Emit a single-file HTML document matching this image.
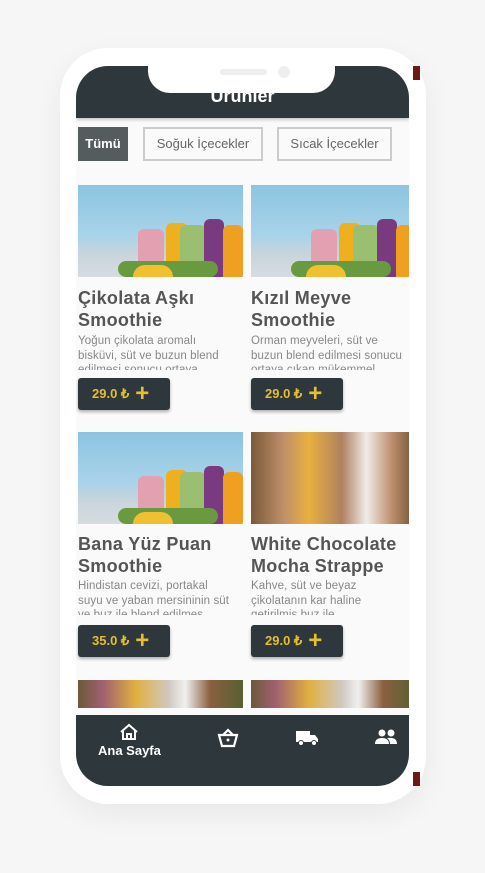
<!DOCTYPE html>
<html><head><meta charset="utf-8"><style>
*{margin:0;padding:0;box-sizing:border-box}
body{width:485px;height:873px;background:#f6f6f6;font-family:"Liberation Sans",sans-serif;position:relative;overflow:hidden}
.frame{position:absolute;left:60px;top:48px;width:366px;height:756px;background:#fff;border-radius:48px;box-shadow:0 10px 30px rgba(0,0,0,.06)}
.red{position:absolute;left:405px;width:15px;background:#6b1a1a}
.screen{position:absolute;left:76px;top:66px;width:333px;height:720px;background:#fafafa;border-radius:32px;overflow:hidden}
.hdr{position:absolute;left:0;top:0;width:333px;height:52px;background:#2d373c;color:#fff;font-weight:bold;font-size:18px;text-align:center;padding-top:20px;box-shadow:0 2px 3px rgba(0,0,0,.2)}
.notch{position:absolute;left:148px;top:66px;width:187px;height:27px;background:#fff;border-radius:0 0 22px 22px}
.spk{position:absolute;left:220px;top:69px;width:47px;height:6px;border-radius:3px;background:#eee}
.cam{position:absolute;left:278px;top:66px;width:12px;height:12px;border-radius:6px;background:#eee}
.tab{position:absolute;top:61px;height:34px;font-size:13px;color:#666;border:2px solid #ccc;text-align:center;line-height:30px}
.img{position:absolute;width:165px;height:92px;overflow:hidden;background:linear-gradient(#8cc4e0,#a9d3ea 55%,#c8d4dc 75%,#d6dce0)}
.b{position:absolute;bottom:0;border-radius:6px 6px 2px 2px}
.t{position:absolute;font-size:18px;font-weight:bold;color:#555;line-height:22px;width:170px;letter-spacing:.3px}
.d{position:absolute;font-size:11.5px;color:#888;line-height:14.5px;width:155px;height:36px;overflow:hidden;letter-spacing:.1px}
.btn{position:absolute;width:92px;height:32px;background:#2d373c;border-radius:3px;color:#e5bf2e;font-weight:bold;font-size:13px;line-height:32px;padding-left:14px;box-shadow:0 2px 3px rgba(0,0,0,.3)}
.btn span{font-size:24px;vertical-align:-3px;margin-left:6px}
.nav{position:absolute;left:0;top:649px;width:333px;height:71px;background:#2d373c}
.shake{background:linear-gradient(90deg,#6b5a3a,#a06070 15%,#e0b040 35%,#d0c8c0 55%,#f0f0f0 65%,#8a6040 80%,#556030)}
</style></head><body>
<div class="frame"></div>
<div class="red" style="top:66px;height:14px;left:413px;width:7px"></div>
<div class="red" style="top:772px;height:14px;left:413px;width:7px"></div>
<div class="screen">
<div class="hdr">Ürünler</div>
<div class="tab" style="left:2px;width:50px;background:#555c5e;border-color:#555c5e;color:#fff;font-weight:bold">Tümü</div>
<div class="tab" style="left:67px;width:120px">Soğuk İçecekler</div>
<div class="tab" style="left:201px;width:115px">Sıcak İçecekler</div>

<div class="img" style="left:2px;top:119px"><div class="b" style="left:60px;width:26px;height:48px;background:#e2a0b0"></div><div class="b" style="left:88px;width:22px;height:54px;background:#efb020"></div><div class="b" style="left:102px;width:26px;height:52px;background:#9bbf70"></div><div class="b" style="left:126px;width:20px;height:58px;background:#7a3a80"></div><div class="b" style="left:145px;width:20px;height:52px;background:#f0a020"></div><div class="b" style="left:40px;width:100px;height:16px;background:#6a9a40;border-radius:8px"></div><div class="b" style="left:55px;width:40px;height:12px;background:#f0c030;border-radius:20px 20px 0 0"></div></div>
<div class="img" style="left:175px;top:119px"><div class="b" style="left:60px;width:26px;height:48px;background:#e2a0b0"></div><div class="b" style="left:88px;width:22px;height:54px;background:#efb020"></div><div class="b" style="left:102px;width:26px;height:52px;background:#9bbf70"></div><div class="b" style="left:126px;width:20px;height:58px;background:#7a3a80"></div><div class="b" style="left:145px;width:20px;height:52px;background:#f0a020"></div><div class="b" style="left:40px;width:100px;height:16px;background:#6a9a40;border-radius:8px"></div><div class="b" style="left:55px;width:40px;height:12px;background:#f0c030;border-radius:20px 20px 0 0"></div></div>
<div class="t" style="left:2px;top:221px">Çikolata Aşkı Smoothie</div>
<div class="t" style="left:175px;top:221px">Kızıl Meyve Smoothie</div>
<div class="d" style="left:2px;top:268px">Yoğun çikolata aromalı bisküvi, süt ve buzun blend edilmesi sonucu ortaya</div>
<div class="d" style="left:175px;top:268px">Orman meyveleri,  süt ve buzun blend edilmesi sonucu ortaya çıkan mükemmel</div>
<div class="btn" style="left:2px;top:312px">29.0 ₺<span>+</span></div>
<div class="btn" style="left:175px;top:312px">29.0 ₺<span>+</span></div>

<div class="img" style="left:2px;top:366px"><div class="b" style="left:60px;width:26px;height:48px;background:#e2a0b0"></div><div class="b" style="left:88px;width:22px;height:54px;background:#efb020"></div><div class="b" style="left:102px;width:26px;height:52px;background:#9bbf70"></div><div class="b" style="left:126px;width:20px;height:58px;background:#7a3a80"></div><div class="b" style="left:145px;width:20px;height:52px;background:#f0a020"></div><div class="b" style="left:40px;width:100px;height:16px;background:#6a9a40;border-radius:8px"></div><div class="b" style="left:55px;width:40px;height:12px;background:#f0c030;border-radius:20px 20px 0 0"></div></div>
<div class="img" style="left:175px;top:366px;background:linear-gradient(90deg,#7a5a3a,#c0906a 20%,#e8b040 35%,#b08060 55%,#f0ece8 70%,#c09070 85%,#6a5030)"></div>
<div class="t" style="left:2px;top:467px">Bana Yüz Puan Smoothie</div>
<div class="t" style="left:175px;top:467px">White Chocolate Mocha Strappe</div>
<div class="d" style="left:2px;top:513px">Hindistan cevizi, portakal suyu ve yaban mersininin süt ve buz ile blend edilmes</div>
<div class="d" style="left:175px;top:513px">Kahve, süt ve beyaz çikolatanın kar haline getirilmiş buz ile</div>
<div class="btn" style="left:2px;top:559px">35.0 ₺<span>+</span></div>
<div class="btn" style="left:175px;top:559px">29.0 ₺<span>+</span></div>

<div class="img shake" style="left:2px;top:614px;height:28px"></div>
<div class="img shake" style="left:175px;top:614px;height:28px"></div>

<div class="nav">
<svg style="position:absolute;left:43px;top:8px" width="20" height="18" viewBox="0 0 20 18"><path d="M2 9 L10 2 L18 9 M4 8 V16 H16 V8 M8 16 V11 H12 V16" fill="none" stroke="#fff" stroke-width="2"/></svg>
<div style="position:absolute;left:22px;top:28px;color:#fff;font-size:13px;font-weight:bold">Ana Sayfa</div>
<svg style="position:absolute;left:141px;top:13px" width="22" height="20" viewBox="0 0 22 20"><path d="M2 7 H20 L17 18 H5 Z M6 7 L11 2 L16 7" fill="none" stroke="#fff" stroke-width="2.2"/><circle cx="11" cy="12" r="1.5" fill="#fff"/></svg>
<svg style="position:absolute;left:219px;top:14px" width="24" height="18" viewBox="0 0 24 18"><path d="M1 2 H15 V13 H1 Z M15 6 H20 L23 10 V13 H15" fill="#fff"/><circle cx="6" cy="14" r="2.5" fill="#fff" stroke="#2d373c"/><circle cx="19" cy="14" r="2.5" fill="#fff" stroke="#2d373c"/></svg>
<svg style="position:absolute;left:298px;top:14px" width="24" height="16" viewBox="0 0 24 16"><circle cx="8" cy="4" r="3.5" fill="#fff"/><circle cx="17" cy="4" r="3.5" fill="#fff"/><path d="M1 15 Q1 9 8 9 Q15 9 15 15 Z M13 9 Q17 8.5 20 9.5 Q23 11 23 15 H16 Q16 11 13 9Z" fill="#fff"/></svg>
</div>
</div>
<div class="notch"></div>
<div class="spk"></div>
<div class="cam"></div>
</body></html>
